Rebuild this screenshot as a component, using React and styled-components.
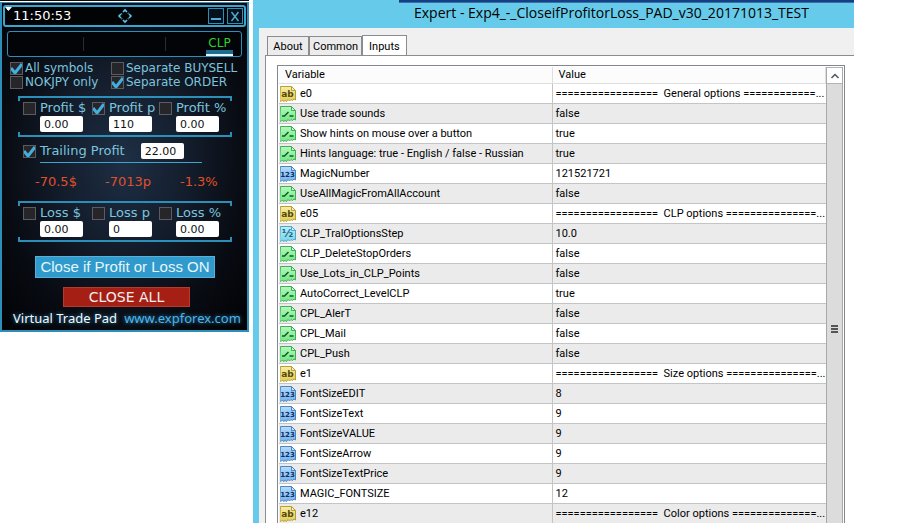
import React, { useState } from 'react';
import styled, { createGlobalStyle } from 'styled-components';

const edge = '#2b8fba';
const padText = '#7cc4de';
const padFont = "'DejaVu Sans', Verdana, sans-serif";
const listFont = "Roboto, 'Liberation Sans', sans-serif";

const GlobalStyle = createGlobalStyle`
  * {
    box-sizing: border-box;
  }

  body {
    margin: 0;
    background: #fff;
    overflow: hidden;
  }

  button,
  input {
    font: inherit;
    margin: 0;
  }
`;

const PageDiv = styled.div`
  display: flex;
  align-items: flex-start;
  gap: 4px;
  height: 100vh;
  padding: 0 58px 1px 0;
`;

/* trade pad */

const PadSection = styled.section`
  flex: 0 0 249px;
  border-top: 1px solid #0a0a0c;
  padding-top: 1px;
  font-family: ${padFont};
  font-size: 13px;
  line-height: 14px;
  color: ${padText};
`;

const PadBodyDiv = styled.div`
  border: 2px solid ${edge};
  border-top-width: 1px;
  padding: 2px 1px 4px;
  background: radial-gradient(
    ellipse at 50% 48%,
    #1e2f45 0%,
    #141e2d 35%,
    #080b12 70%,
    #020204 100%
  );
`;

const PadHeader = styled.header`
  display: flex;
  align-items: center;
  height: 22px;
  padding: 0 1px 0 0;
  border: 2px solid #3aa6d0;
  border-radius: 3px;
  background: #020305;
  color: #fff;
`;

const CornerSvg = styled.svg`
  align-self: flex-start;
  width: 8px;
  height: 5px;
`;

const ClockTime = styled.time`
  flex: 0 0 104px;
`;

const MoveSvg = styled.svg`
  width: 16px;
  height: 16px;
`;

const HeaderButtonsDiv = styled.div`
  flex: 1;
  display: flex;
  justify-content: flex-end;
  gap: 3px;
`;

const HeaderButton = styled.button`
  width: 16px;
  height: 16px;
  padding: 0;
  display: flex;
  border: 1px solid ${edge};
  background: #04101a;
  color: #4aaed6;
`;

const PadTabsNav = styled.nav`
  display: grid;
  grid-template-columns: 76px 82px 1fr;
  height: 26px;
  margin: 4px 4px;
  border: 1px solid ${edge};
  border-radius: 3px;
  background: #030407;
`;

const PadTabDiv = styled.div`
  display: flex;
  justify-content: flex-end;
  background: linear-gradient(#2a2c33, #2a2c33) right center / 1px 14px
    no-repeat;
  &:last-child {
    background: none;
    padding-right: 8px;
  }
`;

const PadTabButton = styled.button`
  display: flex;
  justify-content: center;
  width: 27px;
  padding: 4px 0 0;
  border: 0;
  border-bottom: 2px solid #e4f2fa;
  background: linear-gradient(transparent 18px, #1d6c8e 18px);
  color: #2bd32b;
  font-size: 12px;
  line-height: 14px;
`;

const OptionsDiv = styled.div`
  display: grid;
  grid-template-columns: 101px 1fr;
  padding-left: 7px;
  margin-bottom: 7px;
  font-size: 12px;
`;

const CheckLabel = styled.label`
  display: flex;
  align-items: center;
  gap: ${(props) => props.$gap}px;
  height: 14px;
  white-space: nowrap;
`;

const CheckInput = styled.input`
  appearance: none;
  flex: 0 0 13px;
  height: 13px;
  border: 1px solid #5c5c60;
  background: #26262a;
  &:checked {
    background: #26262a
      url("data:image/svg+xml,%3Csvg xmlns='http://www.w3.org/2000/svg' viewBox='0 0 13 13'%3E%3Cpath d='M1 6l4 5L12 2' fill='none' stroke='%2340aede' stroke-width='3'/%3E%3C/svg%3E")
      border-box;
  }
`;

const GroupFieldset = styled.fieldset`
  min-width: 0;
  display: grid;
  grid-template-columns: 69px 67px 1fr;
  margin: 0 14px 0 15px;
  padding: 3px 0 3px 5px;
  border: solid ${edge};
  border-width: 2px 0;
  background: linear-gradient(${edge}, ${edge}) 0 0 / 2px 3px no-repeat,
    linear-gradient(${edge}, ${edge}) 100% 0 / 2px 3px no-repeat,
    linear-gradient(${edge}, ${edge}) 0 100% / 2px 3px no-repeat,
    linear-gradient(${edge}, ${edge}) 100% 100% / 2px 3px no-repeat;
`;

const FieldDiv = styled.div`
  display: flex;
  flex-direction: column;
  gap: 1px;
`;

const AmountInput = styled.input`
  width: 43px;
  height: 16px;
  margin-left: ${(props) => (props.$inset ? '17px' : '0')};
  padding: 0 4px;
  border: 0;
  border-radius: 2px;
  background: #fff;
  color: #111;
  font-size: 11px;
`;

const TrailingDiv = styled.div`
  display: flex;
  align-items: center;
  gap: 16px;
  margin: 6px 0 0 20px;
`;

const TrailingHr = styled.hr`
  margin: 3px 44px 0 37px;
  border: 0;
  border-top: 1px solid #3da5cf;
`;

const ResultsDiv = styled.div`
  display: grid;
  grid-template-columns: 70px 75px 1fr;
  margin: 12px 0 12px 32px;
  color: #e0502c;
`;

const ToggleButton = styled.button`
  display: block;
  width: 180px;
  height: 22px;
  margin: 14px auto 9px 32px;
  padding: 0;
  border: 1px solid #57b0d8;
  background: #2f9acb;
  color: #e8f6fc;
  font-family: 'Liberation Sans', Arial, sans-serif;
  font-size: 15px;
  line-height: 20px;
`;

const CloseAllButton = styled.button`
  display: block;
  width: 127px;
  height: 20px;
  margin: 0 auto 3px 60px;
  padding: 0;
  border: 1px solid #b73a2c;
  background: #a61f14;
  color: #f3eeee;
  font-size: 14px;
  line-height: 18px;
`;

const PadFooter = styled.footer`
  display: flex;
  gap: 7px;
  padding-left: 10px;
  font-family: 'Noto Sans', 'Open Sans', sans-serif;
  line-height: 16px;
  white-space: nowrap;
  color: #f2f8fc;
  text-shadow: 0 0 4px #2b8cc0;
`;

const SiteLink = styled.a`
  color: #4db4ea;
  text-decoration: none;
`;

/* expert properties window */

const DialogSection = styled.section`
  flex: 1;
  min-width: 0;
  height: 100%;
  display: flex;
  flex-direction: column;
  padding-left: 6px;
  background: #66cbea;
  font-family: ${listFont};
  font-size: 11px;
  color: #000;
  overflow: hidden;
`;

const BackWindowDiv = styled.div`
  flex: none;
  height: 3px;
  margin-left: 140px;
  background: #123f86;
  border-bottom: 1px solid #3c6f9f;
`;

const TitleH1 = styled.h1`
  flex: none;
  margin: 0;
  height: 25px;
  padding-left: 155px;
  font: 14px/20px 'Open Sans', 'Noto Sans', sans-serif;
  white-space: nowrap;
`;

const DialogBodyDiv = styled.div`
  flex: 1;
  min-height: 0;
  display: flex;
  flex-direction: column;
  padding: 7px 0 0 6px;
  background: #f0f0f0;
`;

const TabListDiv = styled.div`
  flex: none;
  display: flex;
  align-items: flex-end;
  padding-left: 2px;
`;

const TabButton = styled.button`
  min-width: 42px;
  height: ${(props) => (props.$active ? '21px' : '19px')};
  margin-bottom: ${(props) => (props.$active ? '-1px' : '0')};
  padding: 0 ${(props) => (props.$active ? '6px' : '3px')};
  border: 1px solid #8a8c92;
  border-bottom: 0;
  background: ${(props) => (props.$active ? '#fff' : '#ececec')};
  color: #000;
  & + & {
    border-left-width: ${(props) => (props.$active ? '1px' : '0')};
  }
`;

const TabPageDiv = styled.div`
  flex: 1;
  min-height: 0;
  padding: 9px 9px 0 11px;
  border: solid #8a8c92;
  border-width: 1px 0 0 1px;
  background: #fff;
`;

const ListFrameDiv = styled.div`
  display: grid;
  grid-template-columns: minmax(0, 1fr) 17px;
  height: 100%;
  padding: 1px 1px 0;
  border: 1px solid #828790;
  border-bottom: 0;
  overflow: hidden;
`;

const ListTable = styled.table`
  width: 100%;
  height: max-content;
  table-layout: fixed;
  border-collapse: separate;
  border-spacing: 0;
`;

const HeadTh = styled.th`
  height: 17px;
  padding: 0 6px;
  border: solid #dedede;
  border-width: 0 1px 1px 0;
  background: #fcfcfc;
  font-weight: normal;
  line-height: 16px;
  text-align: left;
`;

const RowTr = styled.tr`
  background: #fff;
  &:nth-child(even) {
    background: #ebebeb;
  }
`;

const CellTd = styled.td`
  height: 20px;
  padding: 0 0 0 ${(props) => (props.$name ? '1px' : '3px')};
  border: solid #c4c4c4;
  border-width: 0 ${(props) => (props.$name ? '1px' : '0')} 1px 0;
  line-height: 19px;
  white-space: pre;
`;

const NameDiv = styled.div`
  display: flex;
  align-items: center;
  gap: 4px;
`;

const ScrollbarDiv = styled.div`
  display: flex;
  flex-direction: column;
  border: solid #a8a8a8;
  border-width: 0 1px;
`;

const ScrollUpButton = styled.button`
  height: 17px;
  flex: none;
  padding: 0;
  border: solid #b4b4b4;
  border-width: 1px 0;
  background: #fff;
  display: flex;
  align-items: center;
  justify-content: center;
`;

const ScrollThumbDiv = styled.div`
  flex: 1;
  display: flex;
  align-items: center;
  justify-content: center;
  padding-top: 50px;
  background: #dcdcdc;
`;

const iconColors = {
  ab: { light: '#f6edaa', fill: '#e0cb58', edge: '#b7a02e', ink: '#57480a' },
  bool: { light: '#b4f9bd', fill: '#72e686', edge: '#44ad58', ink: '#0d5c22' },
  int: { light: '#b5dcff', fill: '#72b0ea', edge: '#4c86c0', ink: '#0c2f66' },
  real: { light: '#b8f0fb', fill: '#78d4ec', edge: '#4da9c4', ink: '#1d6480' },
};

const iconLabels = { ab: 'ab', int: '123', real: '½' };
const iconSizes = { ab: 9, int: 7, real: 11 };

const TypeIcon = ({ type }) => {
  const { light, fill, edge: stroke, ink } = iconColors[type];
  return (
    <svg width="16" height="16" viewBox="0 0 16 16" aria-hidden="true">
      <defs>
        <linearGradient id={`paper-${type}`} x1="0" y1="0" x2="0" y2="1">
          <stop offset="0" stopColor={light} />
          <stop offset="1" stopColor={fill} />
        </linearGradient>
      </defs>
      <path
        d="M.5 .5h11l4 4v9.500l-1.500-1-1.500 1.500-1.500-1-1.500 1.500-1.500-1.500-1.500 2-1.500-1-1.500 1-1-1.500-1.500 1.500-1.500-1z"
        fill={`url(#paper-${type})`}
        stroke={stroke}
      />
      <path d="M11.500 .5v4h4z" fill="#fff" fillOpacity=".4" stroke={stroke} />
      {type === 'bool' ? (
        <path
          d="M2 10h2.500l4-4M9.500 10h4"
          fill="none"
          stroke={ink}
          strokeWidth="1.500"
        />
      ) : (
        <text
          x="7.500"
          y="11"
          textAnchor="middle"
          fontFamily="'DejaVu Sans', sans-serif"
          fontWeight="bold"
          fontSize={iconSizes[type]}
          fill={ink}
        >
          {iconLabels[type]}
        </text>
      )}
    </svg>
  );
};

const heading = (title, tail) =>
  `${'='.repeat(17)}  ${title} ${'='.repeat(tail)}...`;

const inputs = [
  ['ab', 'e0', heading('General options', 12)],
  ['bool', 'Use trade sounds', 'false'],
  ['bool', 'Show hints on mouse over a button', 'true'],
  ['bool', 'Hints language: true - English / false - Russian', 'true'],
  ['int', 'MagicNumber', '121521721'],
  ['bool', 'UseAllMagicFromAllAccount', 'false'],
  ['ab', 'e05', heading('CLP options', 15)],
  ['real', 'CLP_TralOptionsStep', '10.0'],
  ['bool', 'CLP_DeleteStopOrders', 'false'],
  ['bool', 'Use_Lots_in_CLP_Points', 'false'],
  ['bool', 'AutoCorrect_LevelCLP', 'true'],
  ['bool', 'CPL_AlerT', 'false'],
  ['bool', 'CPL_Mail', 'false'],
  ['bool', 'CPL_Push', 'false'],
  ['ab', 'e1', heading('Size options', 15)],
  ['int', 'FontSizeEDIT', '8'],
  ['int', 'FontSizeText', '9'],
  ['int', 'FontSizeVALUE', '9'],
  ['int', 'FontSizeArrow', '9'],
  ['int', 'FontSizeTextPrice', '9'],
  ['int', 'MAGIC_FONTSIZE', '12'],
  ['ab', 'e12', heading('Color options', 14)],
];

const Check = ({ label, checked, gap }) => (
  <CheckLabel $gap={gap}>
    <CheckInput type="checkbox" defaultChecked={checked} />
    {label}
  </CheckLabel>
);

const LimitGroup = ({ name, fields }) => (
  <GroupFieldset aria-label={name}>
    {fields.map(([unit, value, checked]) => (
      <FieldDiv key={unit}>
        <Check label={`${name} ${unit}`} checked={checked} gap={4} />
        <AmountInput
          $inset
          aria-label={`${name} ${unit} value`}
          defaultValue={value}
        />
      </FieldDiv>
    ))}
  </GroupFieldset>
);

const TradePad = () => (
  <PadSection>
    <PadBodyDiv>
      <PadHeader>
        <CornerSvg viewBox="0 0 8 5" aria-hidden="true">
          <path d="M0 0h7L3.500 4z" fill="#fff" />
        </CornerSvg>
        <ClockTime>11:50:53</ClockTime>
        <MoveSvg viewBox="0 0 16 16" aria-hidden="true">
          <path
            d="M6 4l2-2 2 2M12 6l2 2-2 2M10 12l-2 2-2-2M4 10L2 8l2-2M5 5.500L4.500 6M11 5l.5 .5M11 11l.5-.5M5 11l-.5-.5"
            fill="none"
            stroke="#5cc4ea"
            strokeWidth="1.600"
          />
        </MoveSvg>
        <HeaderButtonsDiv>
          <HeaderButton aria-label="Minimize">
            <svg width="14" height="14" viewBox="0 0 14 14">
              <path d="M2 10h10" stroke="currentColor" strokeWidth="2" />
            </svg>
          </HeaderButton>
          <HeaderButton aria-label="Close">
            <svg width="14" height="14" viewBox="0 0 14 14">
              <path
                d="M3.500 3l7 9M10.500 3l-7 9"
                stroke="currentColor"
                strokeWidth="1.400"
              />
            </svg>
          </HeaderButton>
        </HeaderButtonsDiv>
      </PadHeader>
      <PadTabsNav>
        <PadTabDiv />
        <PadTabDiv />
        <PadTabDiv>
          <PadTabButton>CLP</PadTabButton>
        </PadTabDiv>
      </PadTabsNav>
      <OptionsDiv>
        <Check label="All symbols" checked gap={2} />
        <Check label="Separate BUYSELL" gap={2} />
        <Check label="NOKJPY only" gap={2} />
        <Check label="Separate ORDER" checked gap={2} />
      </OptionsDiv>
      <LimitGroup
        name="Profit"
        fields={[
          ['$', '0.00'],
          ['p', '110', true],
          ['%', '0.00'],
        ]}
      />
      <TrailingDiv>
        <Check label="Trailing Profit" checked gap={4} />
        <AmountInput aria-label="Trailing profit value" defaultValue="22.00" />
      </TrailingDiv>
      <TrailingHr />
      <ResultsDiv>
        <span>-70.5$</span>
        <span>-7013p</span>
        <span>-1.3%</span>
      </ResultsDiv>
      <LimitGroup
        name="Loss"
        fields={[
          ['$', '0.00'],
          ['p', '0'],
          ['%', '0.00'],
        ]}
      />
      <ToggleButton>Close if Profit or Loss ON</ToggleButton>
      <CloseAllButton>CLOSE ALL</CloseAllButton>
      <PadFooter>
        <span>Virtual Trade Pad</span>
        <SiteLink href="http://www.expforex.com">www.expforex.com</SiteLink>
      </PadFooter>
    </PadBodyDiv>
  </PadSection>
);

const ExpertDialog = () => {
  const [tab, setTab] = useState('Inputs');

  return (
    <DialogSection>
      <BackWindowDiv />
      <TitleH1>Expert - Exp4_-_CloseifProfitorLoss_PAD_v30_20171013_TEST</TitleH1>
      <DialogBodyDiv>
        <TabListDiv role="tablist">
          {['About', 'Common', 'Inputs'].map((name) => (
            <TabButton
              key={name}
              role="tab"
              aria-selected={tab === name}
              $active={tab === name}
              onClick={() => setTab(name)}
            >
              {name}
            </TabButton>
          ))}
        </TabListDiv>
        <TabPageDiv>
          <ListFrameDiv>
            <ListTable>
              <thead>
                <tr>
                  <HeadTh>Variable</HeadTh>
                  <HeadTh>Value</HeadTh>
                </tr>
              </thead>
              <tbody>
                {inputs.map(([type, name, value]) => (
                  <RowTr key={name}>
                    <CellTd $name>
                      <NameDiv>
                        <TypeIcon type={type} />
                        {name}
                      </NameDiv>
                    </CellTd>
                    <CellTd>{value}</CellTd>
                  </RowTr>
                ))}
              </tbody>
            </ListTable>
            <ScrollbarDiv>
              <ScrollUpButton aria-label="Scroll up">
                <svg width="10" height="8" viewBox="0 0 10 8">
                  <path
                    d="M1.500 6L5 2.500 8.500 6"
                    fill="none"
                    stroke="#555"
                    strokeWidth="1.500"
                  />
                </svg>
              </ScrollUpButton>
              <ScrollThumbDiv>
                <svg width="7" height="8" viewBox="0 0 7 8">
                  <path d="M0 1h7M0 4h7M0 7h7" stroke="#555" strokeWidth="2" />
                </svg>
              </ScrollThumbDiv>
            </ScrollbarDiv>
          </ListFrameDiv>
        </TabPageDiv>
      </DialogBodyDiv>
    </DialogSection>
  );
};

const App = () => (
  <>
    <GlobalStyle />
    <PageDiv>
      <TradePad />
      <ExpertDialog />
    </PageDiv>
  </>
);

export default App;
